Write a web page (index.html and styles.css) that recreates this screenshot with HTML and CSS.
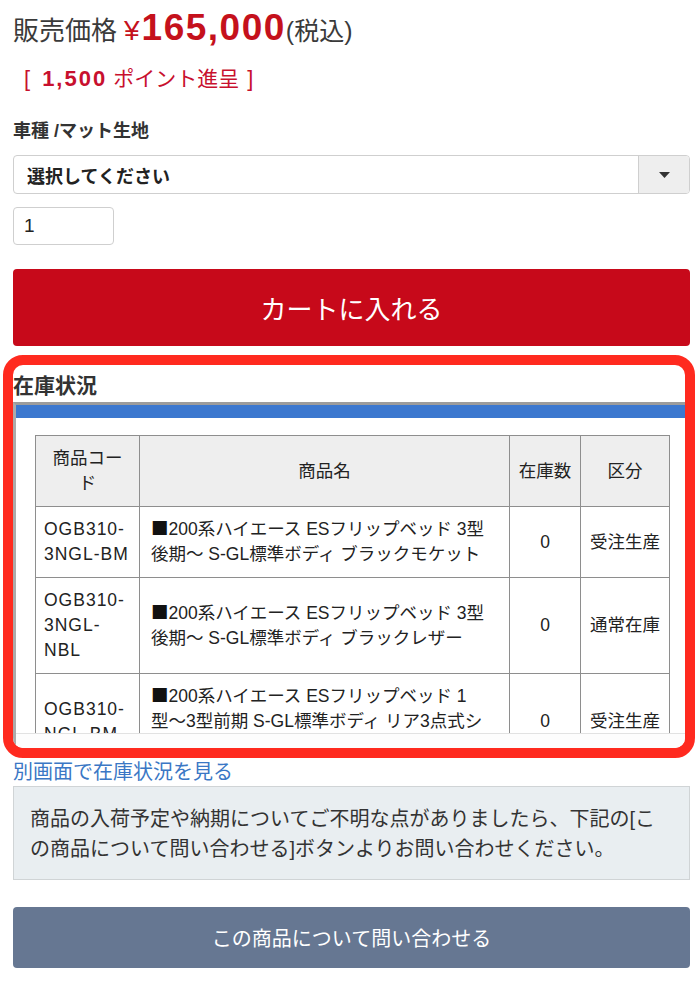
FILE: index.html
```html
<!DOCTYPE html>
<html lang="ja">
<head>
<meta charset="utf-8">
<title>商品詳細</title>
<link rel="stylesheet" href="styles.css">
</head>
<body>
<div class="page">
  <div class="price"><span class="price-label">販売価格</span><span class="yen">¥</span><span class="amount">165,000</span><span class="tax">(税込)</span></div>
  <div class="points"><span class="br">[</span><b class="pt">1,500</b><span class="pt-text">ポイント進呈</span><span class="br">]</span></div>
  <div class="field-label">車種 /マット生地</div>
  <div class="select">
    <span class="select-text">選択してください</span>
    <span class="select-arrow"><svg width="11" height="6" viewBox="0 0 11 6"><path d="M0 0H11L5.5 6Z" fill="#333"/></svg></span>
  </div>
  <div class="qty">1</div>
  <button class="cart">カートに入れる</button>
  <div class="highlight">
    <div class="stock-title">在庫状況</div>
    <div class="frame">
      <div class="frame-bar"></div>
      <div class="frame-body">
        <table class="stock">
          <colgroup><col class="c-code"><col class="c-name"><col class="c-qty"><col class="c-kind"></colgroup>
          <thead>
            <tr><th>商品コー<br>ド</th><th>商品名</th><th>在庫数</th><th>区分</th></tr>
          </thead>
          <tbody>
            <tr>
              <td class="code">OGB310-<br>3NGL-BM</td>
              <td class="name"><span class="sq">■</span>200系ハイエース ESフリップベッド 3型<br>後期〜 S-GL標準ボディ ブラックモケット</td>
              <td class="num">0</td>
              <td class="kind">受注生産</td>
            </tr>
            <tr>
              <td class="code">OGB310-<br>3NGL-<br>NBL</td>
              <td class="name"><span class="sq">■</span>200系ハイエース ESフリップベッド 3型<br>後期〜 S-GL標準ボディ ブラックレザー</td>
              <td class="num">0</td>
              <td class="kind">通常在庫</td>
            </tr>
            <tr>
              <td class="code">OGB310-<br>NGL-BM</td>
              <td class="name"><span class="sq">■</span>200系ハイエース ESフリップベッド 1<br>型〜3型前期 S-GL標準ボディ リア3点式シ<br>ートベルト付 ブラックモケット</td>
              <td class="num">0</td>
              <td class="kind">受注生産</td>
            </tr>
          </tbody>
        </table>
      </div>
      <div class="frame-scroll"></div>
    </div>
  </div>
  <a class="stock-link" href="#">別画面で在庫状況を見る</a>
  <div class="notice">商品の入荷予定や納期についてご不明な点がありましたら、下記の[この商品について問い合わせる]ボタンよりお問い合わせください。</div>
  <button class="contact">この商品について問い合わせる</button>
</div>
</body>
</html>
```

FILE: styles.css
```css
body {
  margin: 0;
  background: #fff;
  font-family: "Liberation Sans", "Noto Sans CJK JP", sans-serif;
  color: #333;
}

.page {
  padding: 0 10px 0 13px;
}

.price {
  padding-top: 3px;
  line-height: 50px;
  height: 49px;
  white-space: nowrap;
}
.price-label {
  font-size: 26px;
  color: #3a3a3a;
}
.yen {
  font-size: 28px;
  color: #c5111c;
  margin-left: 7px;
  margin-right: 2px;
}
.amount {
  font-size: 37px;
  font-weight: bold;
  color: #c5111c;
  letter-spacing: 1.5px;
}
.tax {
  font-size: 25px;
  color: #3a3a3a;
}

.points {
  margin-top: 12px;
  padding-left: 11px;
  color: #c8102e;
  font-size: 21px;
  line-height: 30px;
  height: 30px;
  display: flex;
  align-items: baseline;
}
.points .br {
  font-size: 22px;
}
.points .pt {
  font-size: 22px;
  letter-spacing: 2px;
  margin-left: 12px;
  margin-right: 6px;
}
.points .pt-text {
  margin-right: 8px;
}

.field-label {
  margin-top: 25px;
  font-size: 18px;
  font-weight: bold;
  line-height: 24px;
  color: #333;
}

.select {
  margin-top: 12px;
  height: 39px;
  box-sizing: border-box;
  border: 1px solid #cfcfcf;
  border-radius: 4px;
  display: flex;
  overflow: hidden;
}
.select-text {
  flex: 1;
  padding-left: 13px;
  display: flex;
  align-items: center;
  font-size: 18px;
  font-weight: bold;
  color: #222;
}
.select-arrow {
  width: 50px;
  background: #eeeeee;
  border-left: 1px solid #cfcfcf;
  display: flex;
  align-items: center;
  justify-content: center;
}

.qty {
  margin-top: 13px;
  width: 101px;
  height: 38px;
  box-sizing: border-box;
  border: 1px solid #cfcfcf;
  border-radius: 4px;
  padding-left: 10px;
  font-size: 19px;
  line-height: 36px;
  color: #222;
}

.cart {
  display: block;
  margin-top: 24px;
  width: 100%;
  height: 77px;
  border: none;
  border-radius: 4px;
  background: #c7091a;
  color: #fff;
  font-family: inherit;
  font-size: 26px;
  padding: 0;
}

.highlight {
  position: relative;
  z-index: 1;
  margin: 9px -5px 0 -10px;
  border: 10px solid #ff2a1f;
  border-radius: 20px;
  overflow: hidden;
  background: #fff;
}
.stock-title {
  padding-top: 7px;
  font-size: 21px;
  font-weight: bold;
  line-height: 28px;
  color: #333;
}
.frame {
  margin-top: 2px;
  border-top: 3px solid #9c9c9c;
  border-left: 3px solid #ababab;
}
.frame-bar {
  height: 13px;
  background: #3c78cf;
}
.frame-body {
  height: 315px;
  box-sizing: border-box;
  overflow: hidden;
  padding: 17px 15px 0 19px;
}
.frame-scroll {
  height: 14px;
  border-top: 1px solid #e2e2e2;
  background: #fdfdfd;
}

.stock {
  width: 100%;
  border-collapse: collapse;
  table-layout: fixed;
  font-size: 17.5px;
  line-height: 25px;
  color: #222;
}
.c-code { width: 104px; }
.c-qty { width: 71px; }
.c-kind { width: 89px; }
.stock th,
.stock td {
  border: 1px solid #8e8e8e;
  vertical-align: middle;
}
.stock th {
  background: #eeeeee;
  font-weight: normal;
  padding: 10px 4px;
  text-align: center;
}
.stock td {
  padding: 10px 8px;
}
.stock td.code {
  letter-spacing: 1px;
}
.stock td.name {
  padding-left: 11px;
  white-space: nowrap;
}
.stock .sq {
  font-family: "Noto Sans CJK JP", sans-serif;
  line-height: 1px;
  color: #111;
}
.stock td.num,
.stock td.kind {
  text-align: center;
  padding-left: 2px;
  padding-right: 2px;
}

.stock-link {
  display: block;
  margin-top: 0;
  font-size: 20px;
  line-height: 28px;
  color: #3a77c5;
  text-decoration: none;
}

.notice {
  margin-top: 0;
  background: #e9eef1;
  border: 1px solid #d0d4d6;
  padding: 17px 16px 15px;
  font-size: 20px;
  line-height: 30px;
  color: #333;
}

.contact {
  display: block;
  margin-top: 27px;
  width: 100%;
  height: 61px;
  border: none;
  border-radius: 4px;
  background: #667792;
  color: #fff;
  font-family: inherit;
  font-size: 20px;
  padding: 0;
}
```
